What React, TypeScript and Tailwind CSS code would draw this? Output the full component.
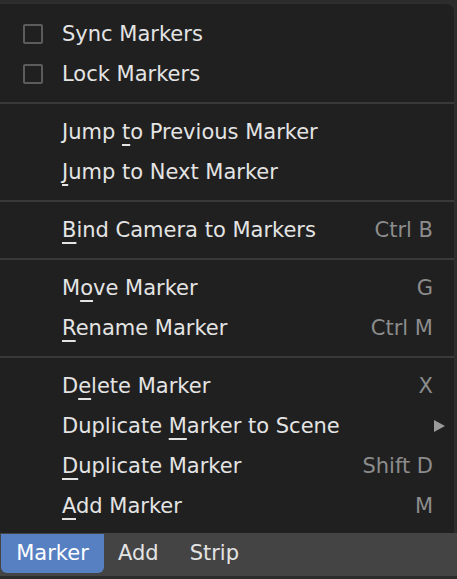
import React from 'react';

type Item = {
  pre: string;
  key: string;
  post: string;
  shortcut?: string;
  check?: boolean;
  submenu?: boolean;
};

const groups: Item[][] = [
  [
    { pre: 'Sync Markers', key: '', post: '', check: true },
    { pre: 'Lock Markers', key: '', post: '', check: true },
  ],
  [
    { pre: 'Jump ', key: 't', post: 'o Previous Marker' },
    { pre: '', key: 'J', post: 'ump to Next Marker' },
  ],
  [{ pre: '', key: 'B', post: 'ind Camera to Markers', shortcut: 'Ctrl B' }],
  [
    { pre: 'M', key: 'o', post: 've Marker', shortcut: 'G' },
    { pre: '', key: 'R', post: 'ename Marker', shortcut: 'Ctrl M' },
  ],
  [
    { pre: 'D', key: 'e', post: 'lete Marker', shortcut: 'X' },
    { pre: 'Duplicate ', key: 'M', post: 'arker to Scene', submenu: true },
    { pre: '', key: 'D', post: 'uplicate Marker', shortcut: 'Shift D' },
    { pre: '', key: 'A', post: 'dd Marker', shortcut: 'M' },
  ],
];

function Row({ item }: { item: Item }) {
  return (
    <div className="flex h-[40px] items-center">
      <div className="flex w-[62px] shrink-0 items-center pl-[23px]">
        {item.check && (
          <span className="block h-[20px] w-[20px] rounded-[2px] border-2 border-[#5c5c5c]" />
        )}
      </div>
      <span className="flex-1 whitespace-pre text-[#e4e4e4]">
        {item.pre}
        {item.key && (
          <span className="underline decoration-[1.5px] underline-offset-[5px]">{item.key}</span>
        )}
        {item.post}
      </span>
      {item.shortcut && <span className="pr-[21px] text-[#8c8c8c]">{item.shortcut}</span>}
      {item.submenu && (
        <svg width="11" height="12" viewBox="0 0 11 12" className="mr-[9px]">
          <path d="M0 0 L11 6 L0 12 Z" fill="#9a9a9a" />
        </svg>
      )}
    </div>
  );
}

export default function App() {
  return (
    <div
      className="flex h-[579px] w-[457px] flex-col bg-[#2c2c2c] text-[21px] leading-none"
      style={{ fontFamily: '"DejaVu Sans", sans-serif' }}
    >
      <div className="mt-[3px] w-[455px] rounded-tr-lg border-r border-t border-[#2f2f2f] bg-[#202020] pb-[7px] pt-[10px]">
        {groups.map((g, gi) => (
          <React.Fragment key={gi}>
            {gi > 0 && (
              <div className="flex h-[18px] items-center">
                <div className="h-[2px] w-full bg-[#393939]" />
              </div>
            )}
            {g.map((item, i) => (
              <Row key={i} item={item} />
            ))}
          </React.Fragment>
        ))}
      </div>
      <div className="flex h-[43px] items-start bg-[#444444]">
        <div className="ml-[1px] mt-[1px] flex h-[39px] w-[103px] items-center justify-center rounded-b-md bg-[#5680c2] text-white">
          Marker
        </div>
        <span className="ml-[14px] flex h-[40px] items-center text-[#e4e4e4]">Add</span>
        <span className="ml-[31px] flex h-[40px] items-center text-[#e4e4e4]">Strip</span>
      </div>
    </div>
  );
}
